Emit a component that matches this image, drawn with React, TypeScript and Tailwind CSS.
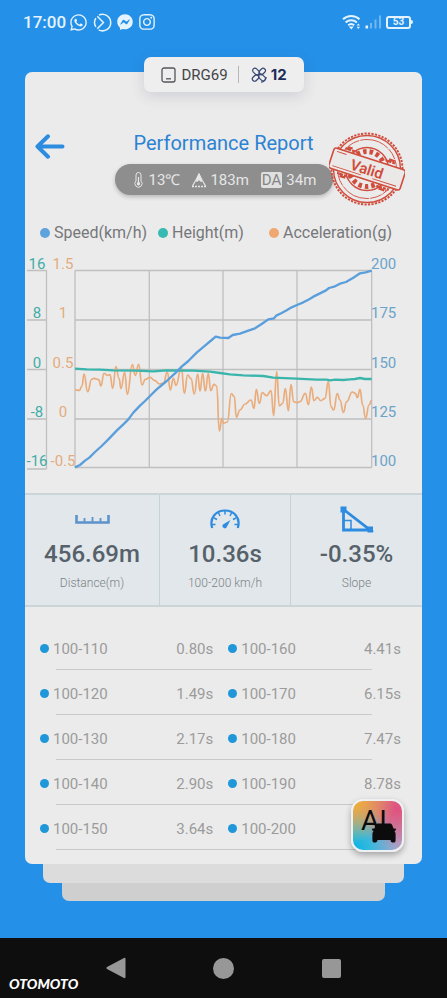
import type { ReactNode } from "react";
import { FaFacebookMessenger, FaInstagram, FaWhatsapp } from "react-icons/fa";

type Point = [number, number];

const speed: Point[] = [
  [165, 652], [180, 645], [195, 632], [208, 623], [225, 606], [245, 588], [265, 568], [290, 542], [310, 523],
  [325, 508], [340, 488], [360, 467], [375, 453], [390, 438], [410, 418], [440, 393], [465, 370], [485, 350],
  [505, 333], [530, 308], [555, 287], [575, 270], [587, 260], [600, 263], [625, 264], [638, 255], [660, 251],
  [685, 242], [705, 235], [725, 222], [745, 208], [762, 205], [770, 196], [785, 189], [800, 181], [815, 172],
  [831, 165], [850, 157], [865, 149], [880, 140], [900, 130], [918, 121], [927, 114], [945, 109], [960, 101],
  [978, 96], [1000, 83], [1020, 70], [1037, 67], [1055, 62],
];

const altitude: Point[] = [
  [165, 356], [200, 358], [240, 359], [280, 361], [350, 362], [400, 364], [440, 361], [520, 362], [570, 365],
  [600, 369], [630, 373], [670, 376], [730, 378], [760, 383], [830, 386], [890, 389], [920, 389], [930, 391],
  [945, 389], [970, 390], [990, 388], [1005, 387], [1020, 384], [1035, 387], [1055, 387],
];

const acceleration: Point[] = [
  [165, 420], [178, 421], [186, 408], [192, 372], [203, 425], [215, 388], [222, 385], [236, 389], [243, 408],
  [252, 370], [262, 376], [270, 374], [278, 415], [288, 350], [297, 385], [303, 416], [314, 367], [322, 433],
  [337, 344], [346, 376], [356, 343], [366, 405], [376, 388], [390, 382], [405, 392], [418, 402], [430, 400],
  [442, 366], [451, 420], [460, 385], [468, 406], [484, 353], [493, 430], [503, 375], [513, 386], [523, 432],
  [533, 372], [540, 423], [548, 371], [556, 423], [565, 371], [572, 422], [582, 403], [590, 408], [598, 543],
  [606, 505], [610, 520], [622, 516], [634, 431], [643, 440], [649, 502], [660, 480], [675, 462], [693, 450],
  [702, 475], [709, 418], [718, 460], [727, 428], [740, 437], [753, 422], [761, 497], [770, 365], [778, 468],
  [788, 460], [796, 416], [805, 482], [813, 404], [821, 455], [830, 458], [840, 455], [856, 430], [865, 464],
  [874, 411], [882, 452], [892, 442], [902, 452], [915, 445], [925, 395], [933, 470], [941, 480], [952, 431],
  [960, 450], [970, 487], [980, 455], [997, 426], [1006, 430], [1012, 443], [1020, 418], [1028, 465],
  [1037, 505], [1047, 465], [1055, 450],
];

const line = (pts: Point[]) => "M" + pts.map((p) => p.join(",")).join("L");

const curve = (pts: Point[]) =>
  pts.reduce((d, [x, y], i) => {
    if (i === 0) return `M${x},${y}`;
    const [px, py] = pts[i - 1];
    const mid = (px + x) / 2;
    return `${d}C${mid},${py} ${mid},${y} ${x},${y}`;
  }, "");

const splits = [
  ["100-110", "0.80s", "100-160", "4.41s"],
  ["100-120", "1.49s", "100-170", "6.15s"],
  ["100-130", "2.17s", "100-180", "7.47s"],
  ["100-140", "2.90s", "100-190", "8.78s"],
  ["100-150", "3.64s", "100-200", ""],
];

function StatusBar() {
  return (
    <header className="flex h-11 items-center justify-between pr-[34px] pl-[23px] text-[#e4f3fd]">
      <div className="flex items-center gap-[5px]">
        <span className="text-[17px] leading-5 font-medium">17:00</span>
        <FaWhatsapp className="-ml-0.5 size-[19px]" aria-label="WhatsApp" />
        <svg viewBox="0 0 20 20" className="size-[19px]" fill="none" stroke="currentColor" strokeWidth="1.6" aria-hidden="true">
          <path d="M6.2 2.2A8.7 8.7 0 1 1 6 17.8M3 14.6A8.7 8.7 0 0 1 3 5.4" />
          <path d="M4.5 3.5 11 10l-6.500 6.500" />
        </svg>
        <FaFacebookMessenger className="size-4" aria-label="Messenger" />
        <FaInstagram className="size-[18px]" aria-label="Instagram" />
      </div>
      <div className="flex items-center gap-1">
        <svg viewBox="0 0 19 16" className="h-4 w-[19px]" fill="none" stroke="currentColor" strokeWidth="2" aria-hidden="true">
          <path d="M1 5.200a12 12 0 0 1 16.500 0M3.600 8.400a8.300 8.300 0 0 1 11.300 0M6.200 11.300a4.700 4.700 0 0 1 6 0" />
          <path d="m6.800 12.600 2.500 2.800 2.500-2.800z" fill="currentColor" stroke="none" />
          <path d="m14.600 11.600 1.700-2.200 1.700 2.200zM14.600 12.800l1.700 2.200 1.700-2.200z" fill="currentColor" stroke="none" />
        </svg>
        <svg viewBox="0 0 17 14" className="h-3.5 w-[17px]" fill="currentColor" aria-hidden="true">
          <rect x="0.500" y="10.500" width="2.600" height="3" />
          <g opacity="0.4">
            <rect x="5" y="8" width="2" height="5.500" />
            <rect x="9.500" y="4.500" width="2" height="9" />
            <rect x="14" y="0.500" width="2" height="13" />
          </g>
        </svg>
        <span className="flex items-center">
          <span className="flex h-[13px] w-[25px] items-center justify-center rounded-[3px] border-2 border-current text-[10px] leading-[10px] font-bold">
            53
          </span>
          <span className="h-1 w-0.5 rounded-r-sm bg-current" />
        </span>
      </div>
    </header>
  );
}

function DeviceChip() {
  return (
    <div className="absolute -top-[15px] left-1/2 flex h-[35px] w-[160px] -translate-x-1/2 items-center rounded-[7px] bg-[#eeeeef] pl-[17px] shadow-[0_4px_14px_rgba(60,70,110,0.16)]">
      <svg viewBox="0 0 15 16" className="h-4 w-[15px] text-[#55565a]" fill="none" stroke="currentColor" strokeWidth="1.300" aria-hidden="true">
        <rect x="1" y="1" width="13" height="14" rx="2" />
        <path d="M5 11.800h5" />
      </svg>
      <span className="ml-1.5 text-[15px] leading-5 text-[#444548]">DRG69</span>
      <span className="ml-2.5 h-[17px] w-px bg-[#b5b5b8]" />
      <svg viewBox="0 0 16 16" className="ml-3 size-4 text-[#394873]" fill="none" stroke="currentColor" strokeWidth="1.200" aria-hidden="true">
        <rect x="1.200" y="2.200" width="7.600" height="4.600" rx="2.300" transform="rotate(45 5 4.500)" />
        <rect x="7.200" y="8.200" width="7.600" height="4.600" rx="2.300" transform="rotate(45 11 10.500)" />
        <rect x="7.600" y="2.200" width="7.200" height="4.600" rx="2.300" transform="rotate(-45 11.200 4.500)" />
        <rect x="1" y="8.700" width="7.200" height="4.600" rx="2.300" transform="rotate(-45 4.600 11)" />
        <path d="M10 15.200c2.900-.1 5.100-2.300 5.200-5.200" />
      </svg>
      <span className="ml-1 font-[Inter,sans-serif] text-[15px] leading-5 font-bold text-[#1d2b57]">12</span>
    </div>
  );
}

function Stamp() {
  return (
    <svg viewBox="0 0 76 76" className="absolute top-[59px] right-[17px] size-[76px]" fill="none" stroke="#d04c3c" role="img" aria-label="Valid stamp">
      <circle cx="38" cy="38" r="35.500" strokeWidth="2" strokeDasharray="2.200 1.300" />
      <circle cx="38" cy="38" r="33.500" strokeWidth="1.400" />
      <circle cx="38" cy="38" r="29.500" strokeWidth="0.900" strokeDasharray="30 1 12 1" />
      <circle cx="38" cy="38" r="21.500" strokeWidth="1.400" />
      <circle cx="38" cy="38" r="17.500" strokeWidth="5" strokeDasharray="3.500 3" />
      <g transform="rotate(18 38 38)">
        <path d="M11 25h12M13 23h5M53 24h11M56 22h6M11 51h13M14 53h7M52 51h13M55 53h8" strokeWidth="2.200" strokeDasharray="6 1 3 1" />
        <rect x="0.500" y="27.500" width="75" height="21" rx="2.500" fill="#ebe9e8" strokeWidth="1.600" />
        <path d="M4 45.500h30M46 45.500h25M4 30.500h10" strokeWidth="1" />
        <text x="38" y="43.500" textAnchor="middle" fontSize="15" fontWeight="600" fill="#d04c3c" stroke="none">
          Valid
        </text>
      </g>
    </svg>
  );
}

function Conditions() {
  return (
    <div className="mx-auto mt-[5px] flex h-[31px] w-[218px] items-center rounded-full bg-[#8e8e8e] pl-[18px] text-[15px] leading-5 text-[#e6e6e6] shadow-[0_2px_4px_rgba(0,0,0,0.22)]">
      <svg viewBox="0 0 11 16" className="h-4 w-[11px]" fill="none" stroke="currentColor" aria-hidden="true">
        <path d="M3 9V3a2.500 2.500 0 0 1 5 0v6a3.600 3.600 0 1 1-5 0z" />
        <path d="M5.500 5v6" strokeWidth="1.200" />
        <circle cx="5.500" cy="11.800" r="1.700" fill="currentColor" stroke="none" />
      </svg>
      <span className="ml-[5px]">13℃</span>
      <svg viewBox="0 0 16 16" className="ml-[11px] size-4" fill="none" stroke="currentColor" aria-hidden="true">
        <path d="M4.600 8.500 8 1.500l3.400 7-1.700 1L8 7.500l-1.700 2z" fill="currentColor" />
        <path d="M4.600 8.500 1.500 14M11.400 8.500l3.100 5.500" strokeWidth="1.200" />
        <path d="M1 14.500h14" strokeWidth="1.500" strokeDasharray="2 1" />
      </svg>
      <span className="ml-[3px]">183m</span>
      <span className="ml-3 rounded-[2px] bg-[#e0e0e0] px-px text-[15px] leading-4 text-[#858585]">DA</span>
      <span className="ml-1">34m</span>
    </div>
  );
}

function LegendItem({ dot, children }: { dot: string; children: ReactNode }) {
  return (
    <li className="flex items-center gap-1 whitespace-nowrap">
      <span className={`size-2.5 rounded-full ${dot}`} />
      {children}
    </li>
  );
}

function Chart() {
  const rows = [20.5, 70, 119.5, 169, 217.5];
  const cols = [50, 124.3, 198, 272, 346.7];
  const left = ["16", "8", "0", "-8", "-16"];
  const middle = ["1.5", "1", "0.5", "0", "-0.5"];
  const right = ["200", "175", "150", "125", "100"];
  return (
    <svg viewBox="0 0 397 230" className="mt-[7px] block w-full" fontSize="15" role="img" aria-label="Speed, height and acceleration over the run">
      <g stroke="#bfbfbf" strokeWidth="1.300">
        {rows.map((y) => (
          <path key={y} d={`M50 ${y}H346.700M2 ${y === 217.5 ? 219 : y}H21.500`} />
        ))}
        {cols.map((x) => (
          <path key={x} d={`M${x} 20.500V217.500`} />
        ))}
        <path d="M21.500 20.500V219" />
      </g>
      <g transform="translate(-5) scale(0.33333)" fill="none" strokeLinejoin="round">
        <path d={curve(acceleration)} stroke="#e9ac7c" strokeWidth="5" />
        <path d={line(altitude)} stroke="#3bb5ac" strokeWidth="7" />
        <path d={line(speed)} stroke="#5a9fdb" strokeWidth="7" />
      </g>
      {rows.map((y, i) => (
        <g key={y}>
          <text x="12" y={y - 2} textAnchor="middle" fill="#41ada8">{left[i]}</text>
          <text x="38" y={y - 2} textAnchor="middle" fill="#e3ab80">{middle[i]}</text>
          <text x="346" y={y - 2} fill="#6ba3c9">{right[i]}</text>
        </g>
      ))}
    </svg>
  );
}

function Stat({ icon, value, label }: { icon: ReactNode; value: string; label: string }) {
  return (
    <div className="flex h-[110px] flex-col items-center pt-[7px]">
      <div className="flex h-[34px] items-center">{icon}</div>
      <div className="mt-1 text-2xl leading-7 font-medium text-[#56616a]">{value}</div>
      <div className="mt-[7px] text-xs leading-4 font-light text-[#7d8386]">{label}</div>
    </div>
  );
}

function RulerIcon() {
  return (
    <svg viewBox="0 0 35 9" className="h-[9px] w-[35px]" fill="none" stroke="#5c93cc" aria-hidden="true">
      <path d="M1.500 0v7.500h32V0" strokeWidth="2.600" />
      <path d="M9.500 3v4M17.500 2v5M25.500 3v4" strokeWidth="1.800" />
    </svg>
  );
}

function GaugeIcon() {
  return (
    <svg viewBox="0 0 30 20" className="h-5 w-[30px]" fill="none" stroke="#2d8be0" aria-hidden="true">
      <path d="M2.200 19C-1 9 6 1.500 15 1.500S31 9 27.800 19" strokeWidth="2.200" />
      <path d="M15 2v3.500M8.500 4l1.500 3M21.500 4 20 7M4 9l3 1.500M26 9l-3 1.500M2 15.500h3.500M28 15.500h-3.500" strokeWidth="1.500" />
      <path d="m20.500 11-4 7.500a2.300 2.300 0 1 1-3.200-3.300z" fill="#2d8be0" stroke="none" />
    </svg>
  );
}

function SlopeIcon() {
  return (
    <svg viewBox="0 0 34 27" className="h-[27px] w-[34px]" fill="none" stroke="#2d8be0" aria-hidden="true">
      <path d="M3.500 3.500v20.500H30z" strokeWidth="2.800" />
      <path d="M4 14.500h7v9" strokeWidth="1.500" />
      <path d="M0.500 0.500h6v6h-6zM27.500 20.500h5.500v6h-5.500z" fill="#2d8be0" stroke="none" />
    </svg>
  );
}

function AiButton() {
  return (
    <button
      type="button"
      aria-label="AI car assistant"
      className="absolute right-[18px] bottom-3 size-[53px] overflow-hidden rounded-[12px] border-2 border-[#eef0f4] bg-[radial-gradient(circle_at_0%_0%,#f2b02e_0%,transparent_60%),radial-gradient(circle_at_0%_100%,#06b4e6_0%,#35b8dd_25%,transparent_65%),radial-gradient(circle_at_90%_15%,#e0507e_0%,transparent_65%),linear-gradient(#cf8a92,#a9a4cc)] shadow-[0_3px_6px_rgba(0,0,0,0.3)]"
    >
      <span className="absolute top-1 left-2 text-[28px] leading-8 text-[#0c0c0c]">AI</span>
      <svg viewBox="0 0 24 20" className="absolute right-1.5 bottom-[7px] h-5 w-6" fill="#0c0c0c" aria-hidden="true">
        <path d="M6 0.500h12c1.200 0 1.800.6 2.200 1.600L21.500 5.500h1.800c.9 0 .9 2-.3 2.200l-.6.200c.8.900 1.200 2 1.200 3.200V17c0 2-.7 2.500-2.300 2.500S18.700 19 18.500 17h-13c-.2 2-1.200 2.500-2.800 2.500S.4 19 .4 17v-5.900c0-1.200.4-2.300 1.200-3.200L1 7.700C-.2 7.500-.2 5.500.700 5.500h1.800l1.300-3.400C4.200 1.100 4.800.5 6 .5z" />
      </svg>
    </button>
  );
}

export default function App() {
  return (
    <div className="flex min-h-screen flex-col bg-[#2490e8] font-[Roboto,sans-serif]">
      <StatusBar />
      <main className="flex-1 px-[25px] pt-7">
        <section className="relative rounded-[7px] bg-[#ebebeb] pt-[57px] pb-[13px]">
          <DeviceChip />
          <div className="grid h-[30px] grid-cols-[50px_1fr_50px]">
            <button type="button" aria-label="Back" className="ml-2.5 self-end text-[#2d8be0]">
              <svg viewBox="0 0 30 26" className="h-[26px] w-[30px]" fill="none" stroke="currentColor" strokeWidth="4" strokeLinecap="round" strokeLinejoin="round" aria-hidden="true">
                <path d="M27.500 13.500H3M13 3.300 2.500 13.500 13 23.700" />
              </svg>
            </button>
            <h1 className="text-center text-xl leading-7 text-[#2c82d3]">Performance Report</h1>
          </div>
          <Conditions />
          <Stamp />
          <ul className="mt-7 grid grid-cols-[118px_111px_auto] pl-[15px] text-base leading-5 text-[#76777a]">
            <LegendItem dot="bg-[#5fa3dd]">Speed(km/h)</LegendItem>
            <LegendItem dot="bg-[#36bab2]">Height(m)</LegendItem>
            <LegendItem dot="bg-[#f0a872]">Acceleration(g)</LegendItem>
          </ul>
          <Chart />
          <div className="mt-[13px] grid grid-cols-[135fr_131fr_131fr] divide-x divide-[#c5d3d5] border-y-2 border-[#cbd4d7] bg-[#e1e7ea]">
            <Stat icon={<RulerIcon />} value="456.69m" label="Distance(m)" />
            <Stat icon={<GaugeIcon />} value="10.36s" label="100-200 km/h" />
            <Stat icon={<SlopeIcon />} value="-0.35%" label="Slope" />
          </div>
          <div className="mt-[19px] pr-[21px] pl-[15px]">
            <table className="w-full table-fixed text-[15px] leading-5 text-[#9b9b9b]">
              <colgroup>
                <col className="w-[24%]" />
                <col className="w-[24%]" />
                <col className="w-[30%]" />
                <col className="w-[22%]" />
              </colgroup>
              <tbody>
                {splits.map(([rangeA, timeA, rangeB, timeB]) => (
                  <tr key={rangeA} className="relative h-[45px] after:absolute after:right-[29px] after:bottom-px after:left-4 after:h-px after:bg-[#c9c9c9]">
                    <th scope="row" className="p-0 text-left font-normal">
                      <span className="flex items-center gap-1">
                        <span className="size-[9px] rounded-full bg-[#1f97d8]" />
                        {rangeA}
                      </span>
                    </th>
                    <td className="p-0 text-right">{timeA}</td>
                    <th scope="row" className="p-0 pl-[15px] text-left font-normal">
                      <span className="flex items-center gap-1">
                        <span className="size-[9px] rounded-full bg-[#1f97d8]" />
                        {rangeB}
                      </span>
                    </th>
                    <td className="p-0 text-right">{timeB}</td>
                  </tr>
                ))}
              </tbody>
            </table>
          </div>
          <AiButton />
        </section>
        <div className="mx-[18px] h-[19px] rounded-b-[7px] bg-[#dcdcdc]" />
        <div className="mx-[37px] h-[18px] rounded-b-[7px] bg-[#cfcfcf]" />
      </main>
      <nav className="relative grid h-[60px] grid-cols-[62px_repeat(3,1fr)_62px] place-items-center bg-[#0e0e0e] text-[#979797]">
        <span className="absolute bottom-1.5 left-[9px] font-[Lato,sans-serif] text-sm leading-4 font-black text-white italic">OTOMOTO</span>
        <button type="button" aria-label="Back" className="col-start-2">
          <svg viewBox="0 0 20 22" className="h-[22px] w-5" fill="currentColor" aria-hidden="true">
            <path d="M18 1 1 10q-1.200 1 0 2l17 9q1.500.6 1.500-1V2q0-1.600-1.500-1z" />
          </svg>
        </button>
        <button type="button" aria-label="Home" className="size-[21px] rounded-full bg-current" />
        <button type="button" aria-label="Recent apps" className="size-[19px] rounded-[2px] bg-current" />
      </nav>
    </div>
  );
}
